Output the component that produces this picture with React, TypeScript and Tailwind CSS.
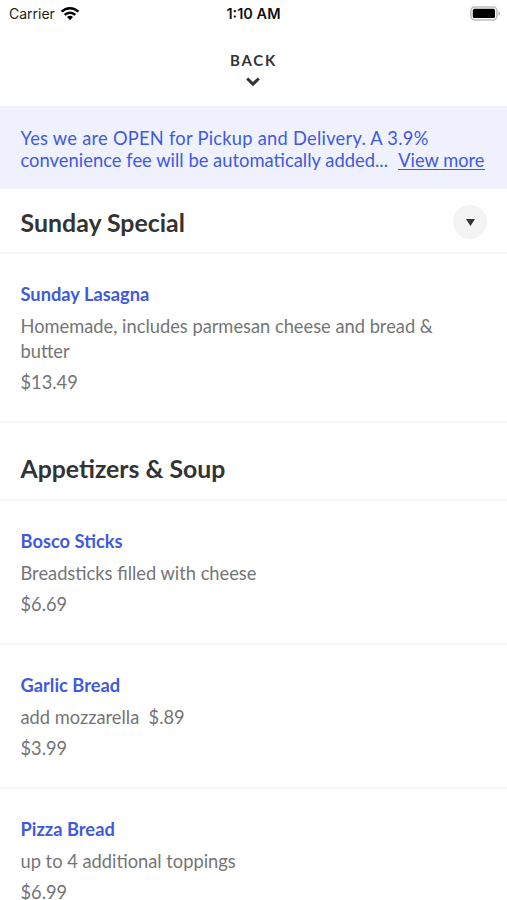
type Dish = {
  name: string;
  description: string;
  price: string;
};

const special: Dish[] = [
  {
    name: "Sunday Lasagna",
    description: "Homemade, includes parmesan cheese and bread & butter",
    price: "$13.49",
  },
];

const appetizers: Dish[] = [
  { name: "Bosco Sticks", description: "Breadsticks filled with cheese", price: "$6.69" },
  { name: "Garlic Bread", description: "add mozzarella  $.89", price: "$3.99" },
  { name: "Pizza Bread", description: "up to 4 additional toppings", price: "$6.99" },
];

function StatusBar() {
  return (
    <div className="grid h-[26px] grid-cols-3 items-center pl-[9px] pr-[6px] font-['Inter',sans-serif] text-[14px] text-black">
      <div className="flex items-center gap-[5px]">
        <span className="text-[#222]">Carrier</span>
        <svg width="20" height="15" viewBox="0 0 20 15" fill="none" stroke="black" strokeWidth="2.5">
          <path d="M1.6 5.6a12 12 0 0 1 16.8 0" />
          <path d="M4.7 8.8a7.6 7.6 0 0 1 10.6 0" />
          <path d="M10 14.2 7 11.1a4.3 4.3 0 0 1 6 0Z" fill="black" stroke="none" />
        </svg>
      </div>
      <span className="pt-0.5 pr-[3px] text-center text-[14.5px] font-semibold whitespace-nowrap text-[#111]">1:10 AM</span>
      <svg className="justify-self-end" width="31" height="15" viewBox="0 0 31 15">
        <rect x="0.9" y="0.9" width="26" height="13" rx="3.8" fill="white" stroke="#bdbdbd" strokeWidth="1.5" />
        <rect x="2.8" y="2.8" width="22.2" height="9.2" rx="1.6" fill="black" />
        <path d="M28.5 5.2q3 2.3 0 4.6Z" fill="#aaa" />
      </svg>
    </div>
  );
}

function DishRow({ dish }: { dish: Dish }) {
  return (
    <li className="border-b-2 border-[#f6f6f6] px-[20.5px] pt-[28px] pb-[25.5px] text-[18.3px]">
      <h3 className="leading-[25px] font-bold text-[#3f5bdc]">{dish.name}</h3>
      <p className="mt-[6.7px] w-[430px] leading-[25px] whitespace-pre-wrap text-[#757575]">
        {dish.description}
      </p>
      <p className="mt-[6.8px] leading-[25px] text-[#757575]">{dish.price}</p>
    </li>
  );
}

export default function App() {
  return (
    <div className="h-[900px] overflow-hidden bg-white font-['Lato',sans-serif] text-[#333]">
      <StatusBar />
      <header className="flex h-[80px] flex-col items-center pt-[24px] pr-0.5">
        <span className="pl-0.5 text-[15px] leading-5 font-bold tracking-[1.8px]">BACK</span>
        <svg className="mt-[7px]" width="14" height="10" viewBox="0 0 14 10" fill="none" stroke="#333" strokeWidth="3">
          <path d="m1.2 1.5 5.8 5.6 5.8-5.6" />
        </svg>
      </header>

      <div className="h-[83px] bg-[#eff1ff] px-[20.5px] pt-[21px] text-[18.3px] leading-[22px] text-[#3f5bdc]">
        <p className="tracking-[0.26px]">Yes we are OPEN for Pickup and Delivery. A 3.9%</p>
        <div className="flex justify-between pr-[2px]">
          <span className="text-[18.4px]">convenience fee will be automatically added...</span>
          <a href="#notice" className="h-[21px] border-b-[1.5px] border-[#3f5bdc]">View more</a>
        </div>
      </div>

      <section>
        <div className="flex h-[65px] items-center justify-between border-b-2 border-[#f6f6f6] px-[20.5px] pt-0.5">
          <h2 className="pt-0.5 text-[24.9px] font-bold">Sunday Special</h2>
          <button className="flex size-[34px] items-center justify-center rounded-full bg-[#f3f3f3]" aria-label="Choose section">
            <svg className="mt-px ml-px" width="9" height="7" viewBox="0 0 9 7">
              <path d="M0 0h9L4.5 7Z" fill="#333" />
            </svg>
          </button>
        </div>
        <ul>
          {special.map((dish) => <DishRow key={dish.name} dish={dish} />)}
        </ul>
      </section>

      <section>
        <div className="h-[78px] border-b-2 border-[#f6f6f6] px-[20.5px] pt-[28.5px]">
          <h2 className="text-[24.8px] leading-9 font-bold">Appetizers & Soup</h2>
        </div>
        <ul>
          {appetizers.map((dish) => <DishRow key={dish.name} dish={dish} />)}
        </ul>
      </section>
    </div>
  );
}
